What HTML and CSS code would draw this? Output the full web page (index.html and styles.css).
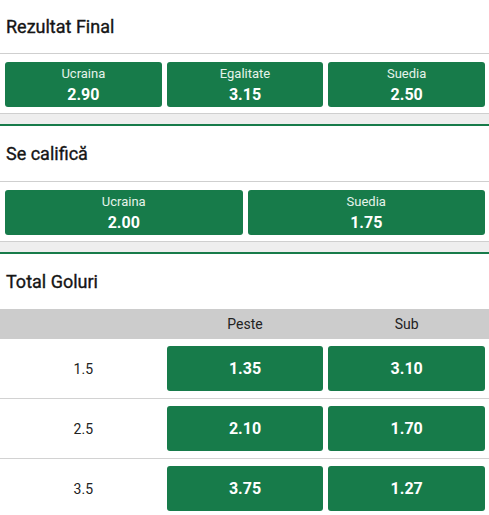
FILE: index.html
```html
<!DOCTYPE html>
<html lang="ro">
<head>
<meta charset="utf-8">
<link rel="stylesheet" href="styles.css">
</head>
<body>
<section class="market">
  <div class="market-title market-title-first">Rezultat Final</div>
  <div class="odds-grid odds-grid-3">
    <button class="odd"><span class="odd-label">Ucraina</span><span class="odd-value">2.90</span></button>
    <button class="odd"><span class="odd-label">Egalitate</span><span class="odd-value">3.15</span></button>
    <button class="odd"><span class="odd-label">Suedia</span><span class="odd-value">2.50</span></button>
  </div>
  <div class="market-sep"></div>
</section>
<section class="market">
  <div class="market-title">Se califică</div>
  <div class="odds-grid odds-grid-2">
    <button class="odd"><span class="odd-label">Ucraina</span><span class="odd-value">2.00</span></button>
    <button class="odd"><span class="odd-label">Suedia</span><span class="odd-value">1.75</span></button>
  </div>
  <div class="market-sep"></div>
</section>
<section class="market">
  <div class="market-title market-title-plain">Total Goluri</div>
  <div class="table-head">
    <span></span><span>Peste</span><span>Sub</span>
  </div>
  <div class="table-row">
    <span class="row-label">1.5</span>
    <button class="odd odd-single"><span class="odd-value">1.35</span></button>
    <button class="odd odd-single"><span class="odd-value">3.10</span></button>
  </div>
  <div class="table-row">
    <span class="row-label">2.5</span>
    <button class="odd odd-single"><span class="odd-value">2.10</span></button>
    <button class="odd odd-single"><span class="odd-value">1.70</span></button>
  </div>
  <div class="table-row">
    <span class="row-label">3.5</span>
    <button class="odd odd-single"><span class="odd-value">3.75</span></button>
    <button class="odd odd-single"><span class="odd-value">1.27</span></button>
  </div>
</section>
</body>
</html>
```
FILE: styles.css
```css
* { box-sizing: border-box; }
html, body { margin: 0; padding: 0; background: #fff; }
body {
  font-family: Roboto, "Liberation Sans", Arial, sans-serif;
  color: #1d1d1d;
  width: 489px;
}
.market-title {
  height: 56px;
  padding-left: 6px;
  display: flex;
  align-items: center;
  font-size: 18px;
  font-weight: 400;
  -webkit-text-stroke: 0.35px #151515;
  color: #151515;
  border-bottom: 1px solid #cfcfcf;
}
.market-title-first { height: 54px; }
.market-title-plain { border-bottom: none; height: 55px; }
.odds-grid {
  display: grid;
  gap: 5px;
  padding: 8px 4px 6px 5px;
}
.odds-grid-3 { grid-template-columns: repeat(3, 1fr); }
.odds-grid-2 { grid-template-columns: repeat(2, 1fr); }
.odd {
  height: 45px;
  border: none;
  border-radius: 3px;
  background: #177b4a;
  color: #fff;
  font-family: inherit;
  padding: 1px 0 0 0;
  margin: 0;
  display: flex;
  flex-direction: column;
  align-items: center;
  justify-content: center;
  gap: 3px;
}
.odd-single { gap: 0; padding: 0; }
.odd-label {
  font-size: 13px;
  line-height: 16px;
  color: #e6f3ea;
}
.odd-value {
  font-size: 16px;
  font-weight: 700;
  line-height: 20px;
}
.market-sep {
  height: 13px;
  background: #eeeeee;
  border-top: 1px solid #cfcfcf;
  border-bottom: 2px solid #177b4a;
}
.table-head {
  display: grid;
  grid-template-columns: repeat(3, 1fr);
  gap: 5px;
  padding: 0 4px 0 5px;
  height: 30px;
  align-items: center;
  background: #cccccc;
  font-size: 14px;
  color: #222;
  text-align: center;
}
.table-row {
  display: grid;
  grid-template-columns: repeat(3, 1fr);
  gap: 5px;
  padding: 7px 4px 7px 5px;
  align-items: center;
  border-bottom: 1px solid #d2d2d2;
}
.row-label {
  text-align: center;
  font-size: 14px;
  color: #222;
}
```
